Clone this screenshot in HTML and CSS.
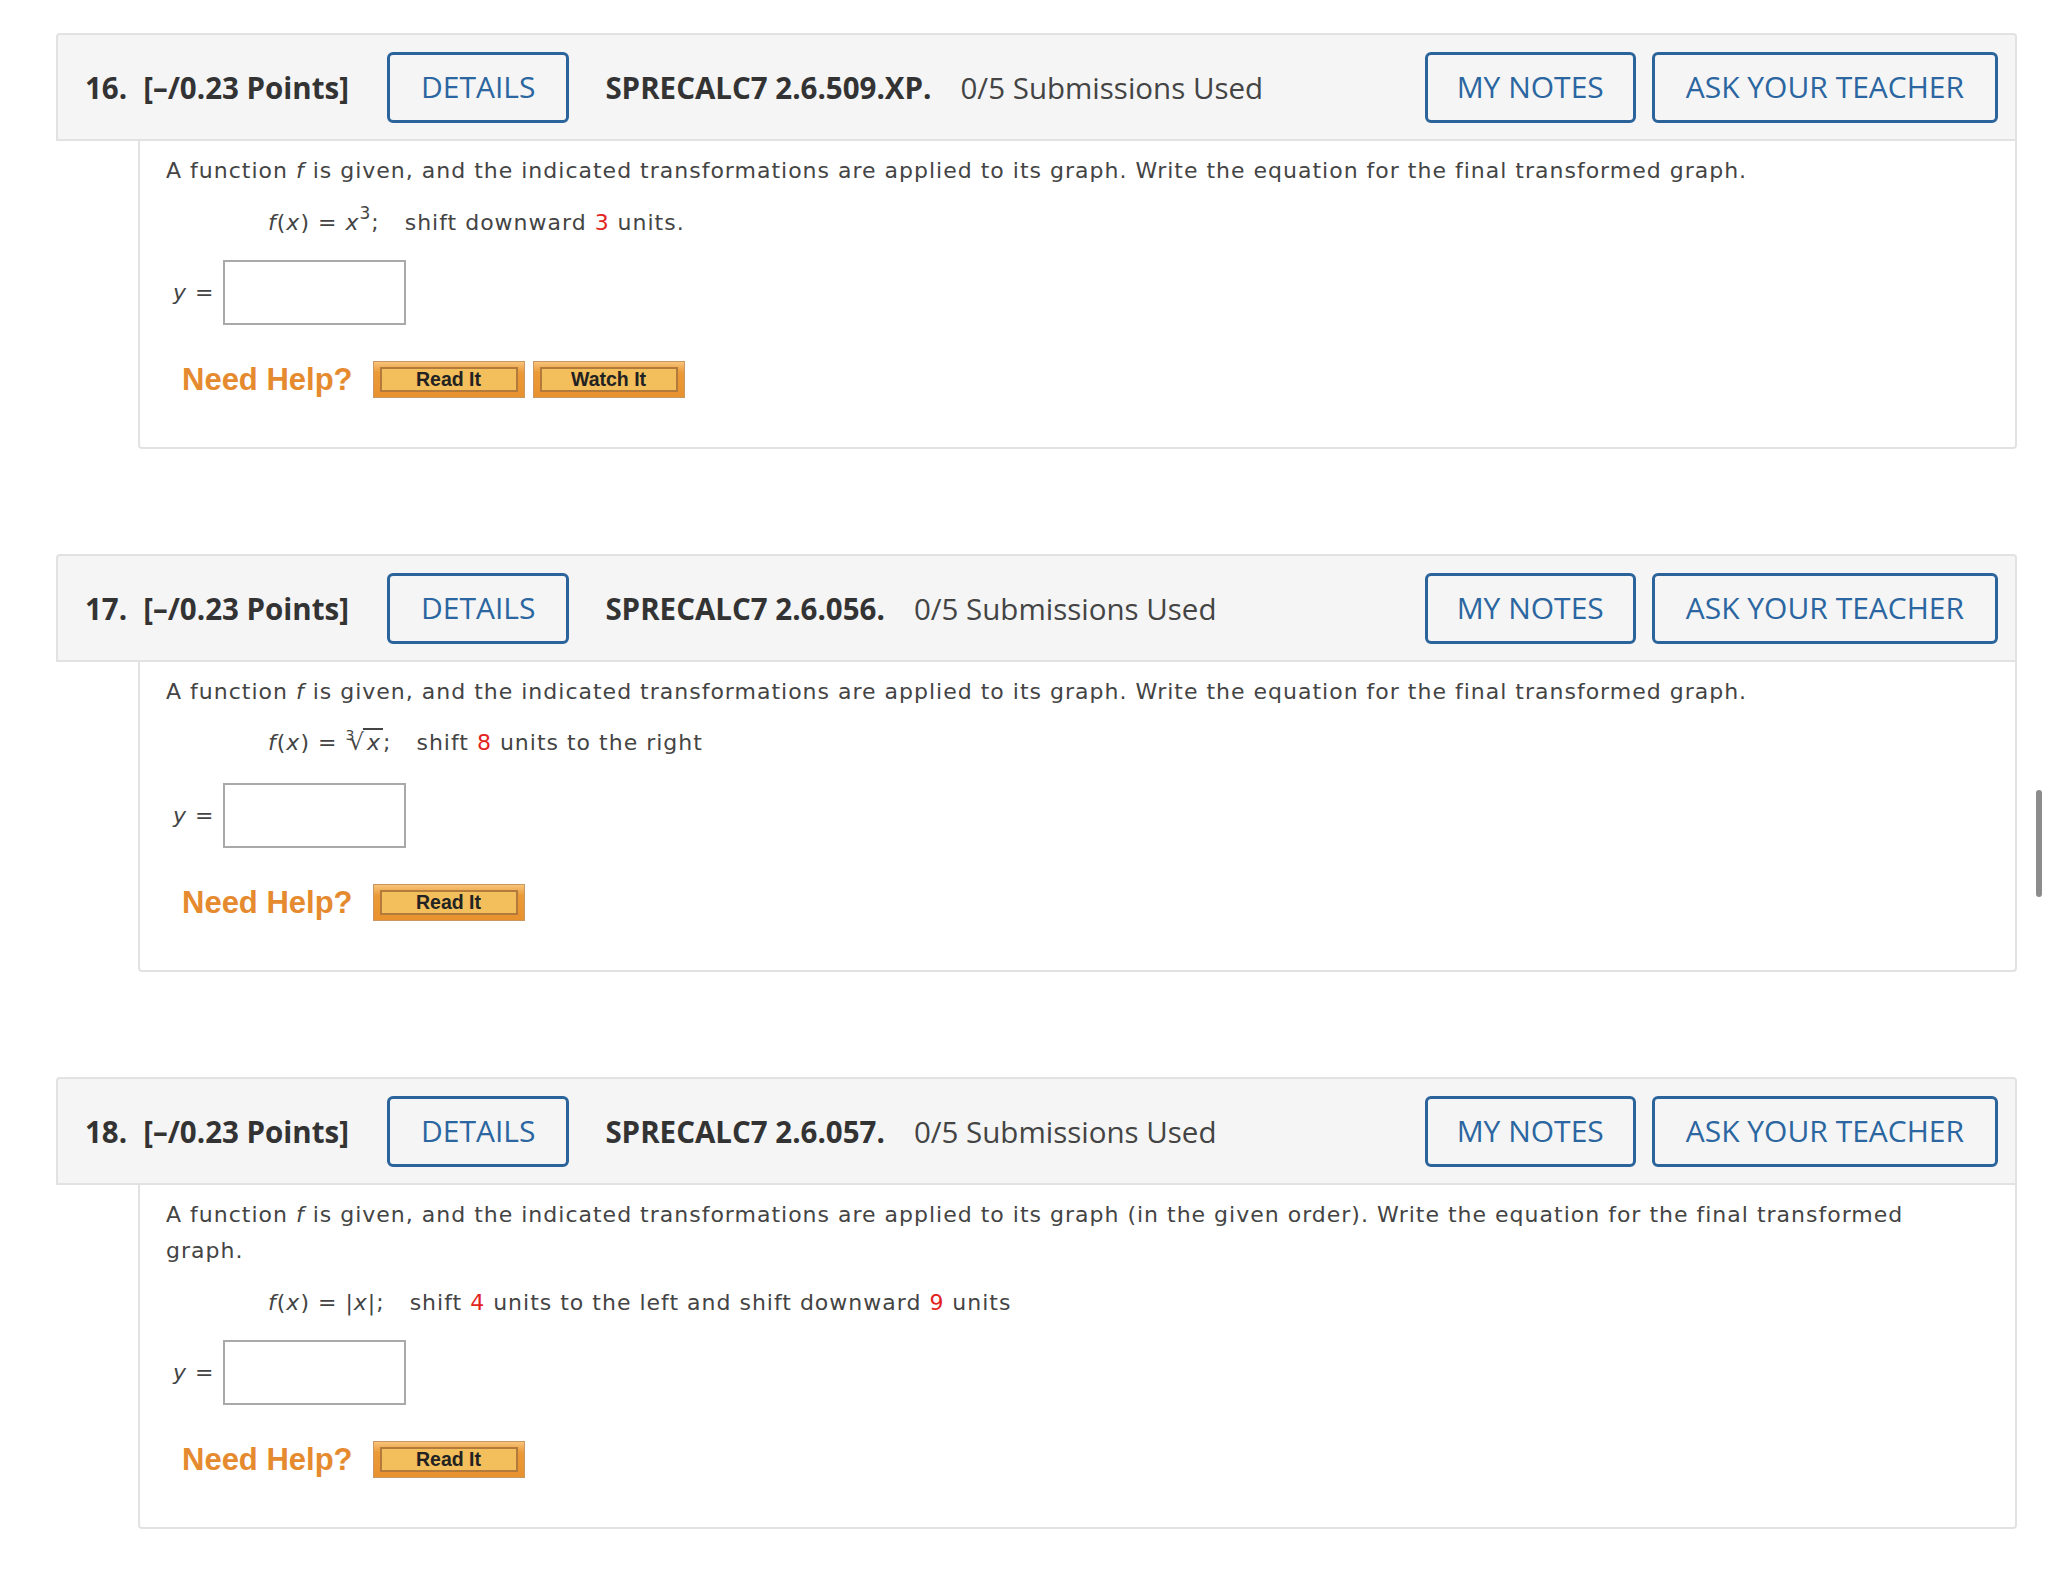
FILE: index.html
```html
<!DOCTYPE html>
<html lang="en">
<head>
<meta charset="utf-8">
<title>Questions</title>
<link rel="stylesheet" href="styles.css">
</head>
<body>
<main class="page">

  <section class="question">
    <header class="qhead">
      <span class="qnum">16.</span>
      <span class="qpoints">[–/0.23 Points]</span>
      <button class="outline-btn">DETAILS</button>
      <span class="qcode">SPRECALC7 2.6.509.XP.</span>
      <span class="qsubs">0/5 Submissions Used</span>
      <div class="qactions">
        <button class="outline-btn">MY NOTES</button>
        <button class="outline-btn">ASK YOUR TEACHER</button>
      </div>
    </header>
    <div class="qbody">
      <p class="prompt">A function <i>f</i> is given, and the indicated transformations are applied to its graph. Write the equation for the final transformed graph.</p>
      <p class="formula"><i>f</i>(<i>x</i>) = <i>x</i><sup class="pow">3</sup>;<span class="desc">shift downward <span class="red">3</span> units.</span></p>
      <div class="answer">
        <span class="ylabel"><i>y</i> =</span>
        <span class="answer-box"></span>
      </div>
      <div class="help">
        <span class="need-help">Need Help?</span>
        <span class="help-btn"><span class="help-inner">Read It</span></span>
        <span class="help-btn"><span class="help-inner">Watch It</span></span>
      </div>
    </div>
  </section>

  <section class="question">
    <header class="qhead">
      <span class="qnum">17.</span>
      <span class="qpoints">[–/0.23 Points]</span>
      <button class="outline-btn">DETAILS</button>
      <span class="qcode">SPRECALC7 2.6.056.</span>
      <span class="qsubs">0/5 Submissions Used</span>
      <div class="qactions">
        <button class="outline-btn">MY NOTES</button>
        <button class="outline-btn">ASK YOUR TEACHER</button>
      </div>
    </header>
    <div class="qbody">
      <p class="prompt">A function <i>f</i> is given, and the indicated transformations are applied to its graph. Write the equation for the final transformed graph.</p>
      <p class="formula formula-tall"><i>f</i>(<i>x</i>) = <sup class="root-index">3</sup><span class="radical">√</span><span class="radicand"><i>x</i></span>;<span class="desc">shift <span class="red">8</span> units to the right</span></p>
      <div class="answer">
        <span class="ylabel"><i>y</i> =</span>
        <span class="answer-box"></span>
      </div>
      <div class="help">
        <span class="need-help">Need Help?</span>
        <span class="help-btn"><span class="help-inner">Read It</span></span>
      </div>
    </div>
  </section>

  <section class="question">
    <header class="qhead">
      <span class="qnum">18.</span>
      <span class="qpoints">[–/0.23 Points]</span>
      <button class="outline-btn">DETAILS</button>
      <span class="qcode">SPRECALC7 2.6.057.</span>
      <span class="qsubs">0/5 Submissions Used</span>
      <div class="qactions">
        <button class="outline-btn">MY NOTES</button>
        <button class="outline-btn">ASK YOUR TEACHER</button>
      </div>
    </header>
    <div class="qbody">
      <p class="prompt">A function <i>f</i> is given, and the indicated transformations are applied to its graph (in the given order). Write the equation for the final transformed graph.</p>
      <p class="formula"><i>f</i>(<i>x</i>) = |<i>x</i>|;<span class="desc">shift <span class="red">4</span> units to the left and shift downward <span class="red">9</span> units</span></p>
      <div class="answer">
        <span class="ylabel"><i>y</i> =</span>
        <span class="answer-box"></span>
      </div>
      <div class="help">
        <span class="need-help">Need Help?</span>
        <span class="help-btn"><span class="help-inner">Read It</span></span>
      </div>
    </div>
  </section>

</main>
<div class="scroll-thumb"></div>
</body>
</html>
```

FILE: styles.css
```css
html, body {
  margin: 0;
  padding: 0;
  background: #ffffff;
}

.page {
  padding: 33px 31px 40px 56px;
  display: flex;
  flex-direction: column;
  gap: 105px;
}

.qhead {
  display: flex;
  align-items: center;
  height: 108px;
  box-sizing: border-box;
  padding: 0 17px 0 27px;
  background: #f5f5f5;
  border: 2px solid #e2e2e2;
  border-radius: 4px 4px 0 0;
  font-family: "Open Sans", "Liberation Sans", sans-serif;
  font-size: 29.5px;
  color: #333333;
}

.qnum {
  font-weight: 700;
  margin-right: 16px;
}

.qpoints {
  font-weight: 700;
  margin-right: 38px;
}

.qcode {
  font-weight: 700;
  margin-left: 36px;
  margin-right: 29px;
}

.qsubs {
  font-weight: 400;
  color: #444444;
}

.qactions {
  margin-left: auto;
  display: flex;
  gap: 16px;
}

.outline-btn {
  height: 71px;
  box-sizing: border-box;
  padding: 0 31px;
  border: 3px solid #2b649b;
  border-radius: 6px;
  background: transparent;
  font-family: "Open Sans", "Liberation Sans", sans-serif;
  font-size: 30px;
  font-weight: 400;
  color: #2b66a0;
  line-height: 1;
}

.qactions .outline-btn:first-child {
  padding: 0 29px;
}

.qbody {
  margin-left: 82px;
  border: 2px solid #e2e2e2;
  border-top: none;
  border-radius: 0 0 4px 4px;
  padding: 12px 55px 49px 26px;
  font-family: "DejaVu Sans", Verdana, sans-serif;
  font-size: 22px;
  letter-spacing: 1px;
  color: #444444;
}

.prompt {
  margin: 0;
  line-height: 36px;
}

.formula {
  margin: 16px 0 0 102px;
  line-height: 36px;
}

.formula-tall {
  margin-top: 11px;
  line-height: 42px;
}

.desc {
  margin-left: 25px;
}

.pow {
  font-size: 17px;
  line-height: 0;
  vertical-align: 11px;
}

.red {
  color: #e3241e;
}

.root-index {
  font-size: 14px;
  line-height: 0;
  vertical-align: 10px;
  letter-spacing: 0;
  margin-right: -5px;
}

.radical {
  font-size: 23px;
  letter-spacing: 0;
}

.radicand {
  border-top: 2px solid #444444;
  padding: 0 2px 0 4px;
  margin-left: -1px;
}

.answer {
  margin-top: 19px;
  display: flex;
  align-items: center;
  gap: 9px;
  padding-left: 7px;
}

.answer-box {
  width: 183px;
  height: 65px;
  box-sizing: border-box;
  border: 2px solid #a9a9a9;
  background: #ffffff;
}

.help {
  margin-top: 36px;
  display: flex;
  align-items: center;
  padding-left: 16px;
  height: 37px;
  letter-spacing: 0;
}

.need-help {
  font-family: "Liberation Sans", Arial, sans-serif;
  font-weight: 700;
  font-size: 31px;
  color: #e58a2e;
  margin-right: 20px;
}

.help-btn {
  display: flex;
  width: 152px;
  height: 37px;
  box-sizing: border-box;
  padding: 5px 6px 5px 6px;
  margin-right: 8px;
  border: 1px solid #c99862;
  background: linear-gradient(#f7c47a, #eb9a38 30%, #e8922e);
}

.help-inner {
  flex: 1;
  display: flex;
  align-items: center;
  justify-content: center;
  border: 2px solid #b27b3c;
  background: #f3be5c;
  font-family: "Liberation Sans", Arial, sans-serif;
  font-weight: 700;
  font-size: 19.5px;
  color: #222222;
}

.scroll-thumb {
  position: fixed;
  right: 6px;
  top: 790px;
  width: 6px;
  height: 107px;
  border-radius: 3px;
  background: #8c8c8c;
}
```
